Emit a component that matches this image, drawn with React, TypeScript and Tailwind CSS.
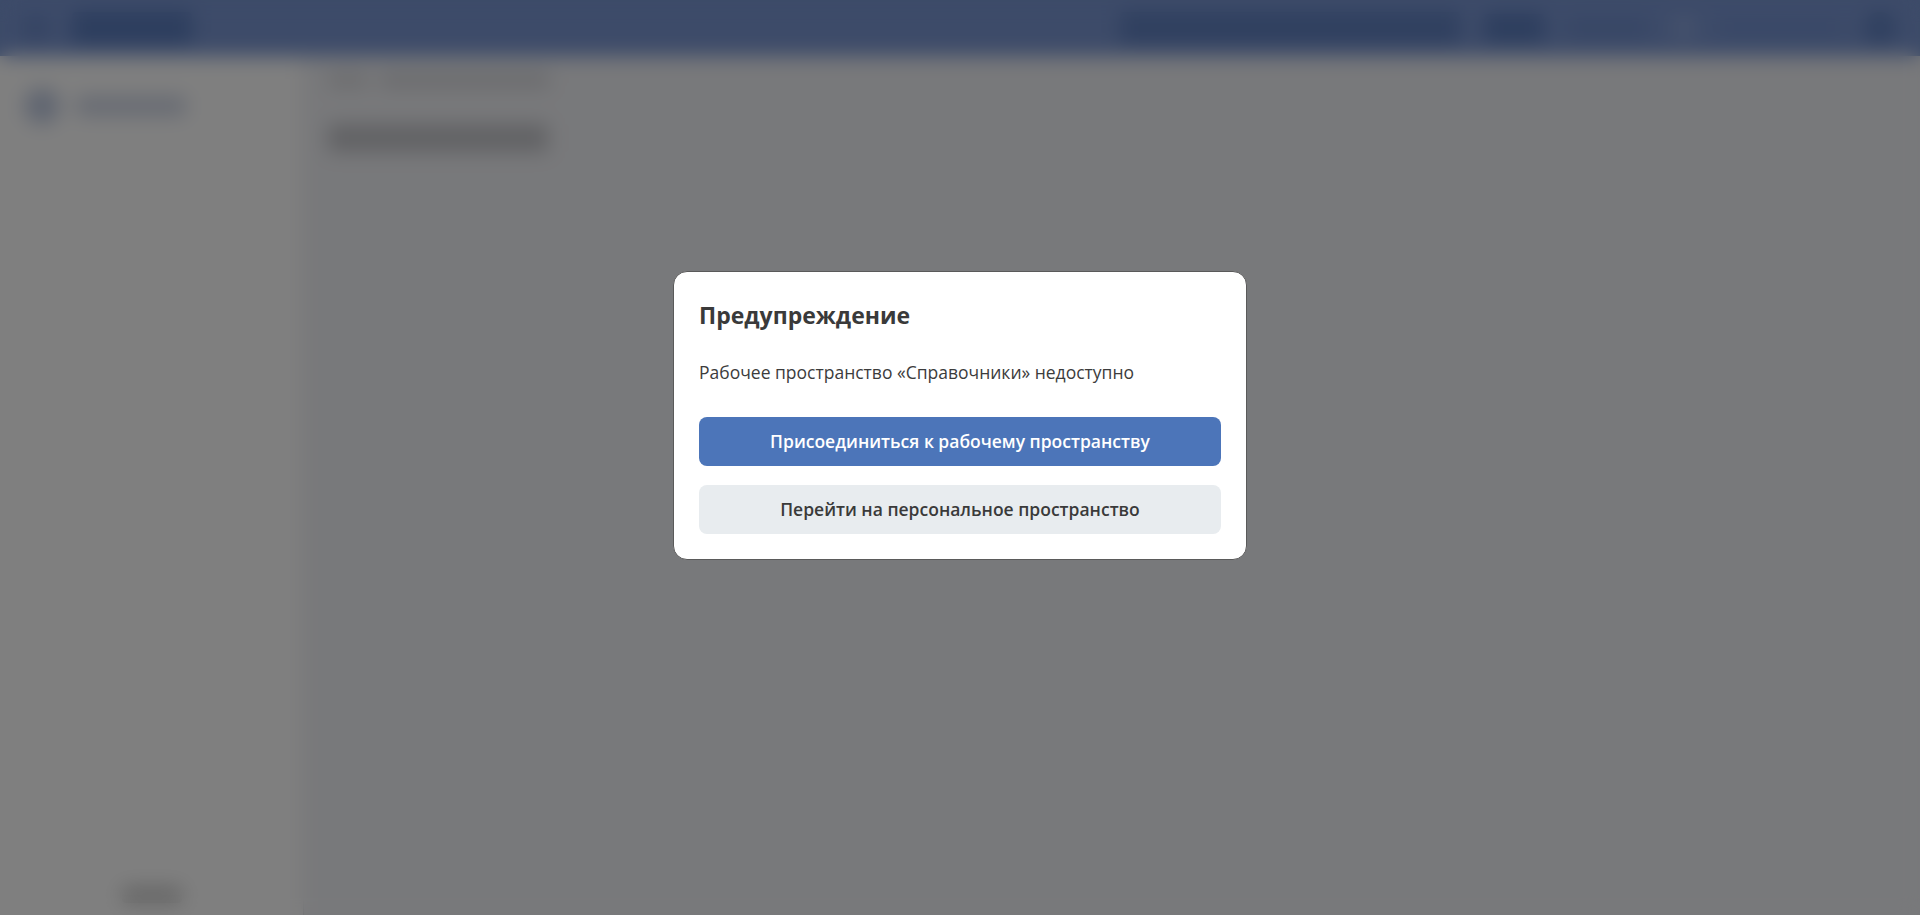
import React from 'react'

const font = { fontFamily: '"Open Sans", "Noto Sans", sans-serif' }

const AppShell = () => (
  <div className="flex h-screen w-full flex-col bg-[#f1f2f6]">
    {/* Header */}
    <div className="flex h-[56px] shrink-0 items-center justify-between bg-[#7a96d2] px-6">
      <div className="flex items-center gap-6">
        <div className="h-6 w-6 rounded bg-[#6a88c6]" />
        <div className="h-8 w-[120px] rounded bg-[#5a7cbc]" />
      </div>
      <div className="flex items-center gap-6">
        <div className="h-8 w-[340px] rounded bg-[#6080bf]" />
        <div className="h-7 w-[60px] rounded bg-[#5a7cbc]" />
        <div className="h-5 w-[80px] rounded bg-[#6f8dcb]" />
        <div className="h-6 w-6 rounded-full bg-[#8ea6da]" />
        <div className="h-5 w-[120px] rounded bg-[#7391cf]" />
        <div className="h-8 w-8 rounded-full bg-[#5f80bf]" />
      </div>
    </div>
    <div className="flex min-h-0 flex-1">
      {/* Sidebar */}
      <div className="flex w-[304px] shrink-0 flex-col justify-between border-r border-[#dcdde2] bg-white px-6 pt-8 pb-3">
        <div className="flex items-center gap-4">
          <div className="h-9 w-9 rounded-full bg-[#c0cbe2]" />
          <div className="h-5 w-[110px] rounded bg-[#cfd6e6]" />
        </div>
        <div className="flex justify-center">
          <div className="h-4 w-[60px] rounded bg-[#c8c8c8]" />
        </div>
      </div>
      {/* Main */}
      <div className="flex flex-1 flex-col gap-9 px-6 py-4">
        <div className="flex items-center gap-3">
          <div className="h-4 w-[40px] rounded bg-[#d9dade]" />
          <div className="h-4 w-[170px] rounded bg-[#d6d7dc]" />
        </div>
        <div className="h-7 w-[220px] rounded bg-[#c4c5ca]" />
      </div>
    </div>
  </div>
)

export default function App() {
  return (
    <div className="relative h-screen w-full overflow-hidden" style={font}>
      <AppShell />
      <div className="absolute inset-0 flex justify-center bg-black/50 pt-[271px] backdrop-blur-[10px]">
        <div className="flex h-fit w-[574px] flex-col rounded-[14px] border border-[#5a5a5a] bg-white px-[25px] pt-[26px] pb-[25px]">
          <h2 className="text-[23px] leading-[34px] font-bold text-[#3a3a3a]">Предупреждение</h2>
          <p className="mt-[27px] text-[17.5px] leading-[26px] text-[#3c3c3c]">
            Рабочее пространство «Справочники» недоступно
          </p>
          <button className="mt-[32px] h-[49px] w-full rounded-lg bg-[#4c75b9] text-[17.5px] font-semibold text-white">
            Присоединиться к рабочему пространству
          </button>
          <button className="mt-[19px] h-[49px] w-full rounded-lg bg-[#e8ecef] text-[17.5px] font-semibold text-[#3a3a3a]">
            Перейти на персональное пространство
          </button>
        </div>
      </div>
    </div>
  )
}
